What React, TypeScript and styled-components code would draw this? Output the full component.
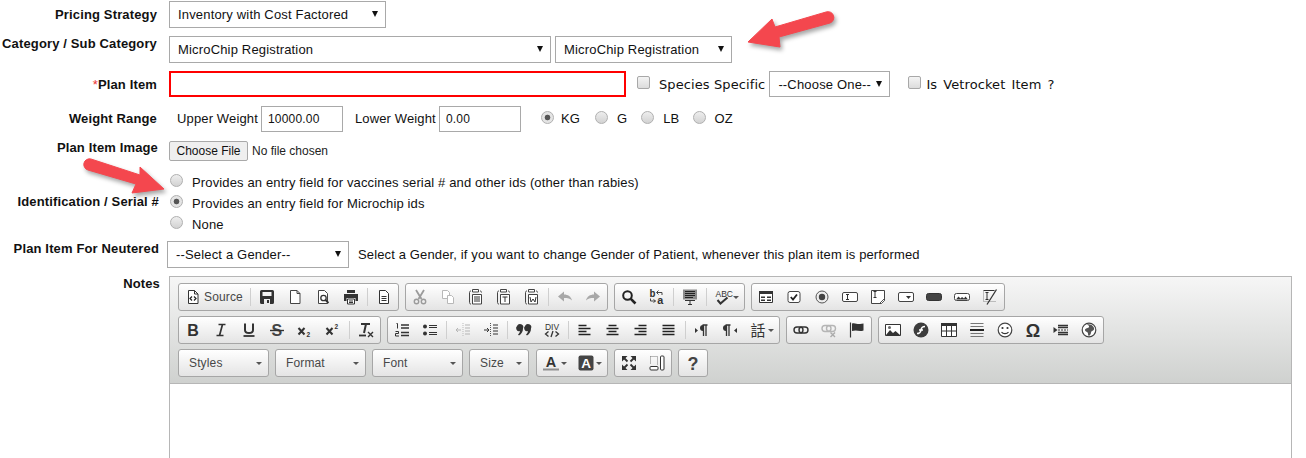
import React from 'react';
import styled, { createGlobalStyle } from 'styled-components';

const GlobalStyle = createGlobalStyle`
  html, body {
    margin: 0;
    padding: 0;
    background: #fff;
    overflow: hidden;
  }
  body {
    font-family: 'Liberation Sans', Arial, sans-serif;
    font-size: 13px;
    letter-spacing: 0.14px;
    color: #111;
  }
`;

// ckeditor toolbar glyphs, all on a 16x16 grid
const ICONS: Record<string, React.ReactNode> = {
  source: (
    <>
      <path d="M3.500 1.500h6l3.500 3.500v9.500h-9.500z" fill="#fff" stroke="#333" />
      <path d="M9.500 1.500v3.500h3.500" fill="none" stroke="#333" />
      <path d="M7 7.500l-2 2 2 2M9 7.500l2 2-2 2" fill="none" stroke="#222" strokeWidth="1.200" />
    </>
  ),
  save: (
    <path
      fillRule="evenodd"
      d="M2.500 1h11a1.500 1.500 0 0 1 1.500 1.500v11a1.500 1.500 0 0 1-1.500 1.500h-11a1.500 1.500 0 0 1-1.500-1.500v-11a1.500 1.500 0 0 1 1.500-1.500zM3.500 3v4h9v-4zM5 10v5h6v-5zM8 11h2v3h-2z"
      fill="#333"
    />
  ),
  newpage: <path d="M3.500 1.500h6.500l3 3v10h-9.500zM10 1.500v3h3" fill="#fff" stroke="#444" />,
  preview: (
    <>
      <path d="M3.500 1.500h6l3 3v10h-9z" fill="#fff" stroke="#444" />
      <circle cx="8.500" cy="9" r="2.700" fill="#fff" stroke="#333" strokeWidth="1.300" />
      <path d="M10.500 11l3 3" stroke="#333" strokeWidth="1.800" />
    </>
  ),
  print: (
    <>
      <path d="M4 1h8v3h-8z" fill="#333" />
      <path d="M1 5h14v7h-2.500v-3h-9v3h-2.500z" fill="#333" />
      <path d="M4.500 10h7v5h-7z" fill="#fff" stroke="#333" />
      <path d="M6 12h4M6 13.500h4" stroke="#333" />
    </>
  ),
  templates: (
    <>
      <path d="M3.500 1.500h6l3 3v10h-9z" fill="#fff" stroke="#333" />
      <path d="M5.500 7.500h5M5.500 9.500h5M5.500 11.500h5" stroke="#333" />
    </>
  ),
  cut: (
    <g fill="none" stroke="#9b9b9b">
      <path d="M4 1l5.500 9M12 1l-5.500 9" strokeWidth="1.800" />
      <circle cx="4.500" cy="12.500" r="2.200" strokeWidth="1.400" />
      <circle cx="11.500" cy="12.500" r="2.200" strokeWidth="1.400" />
    </g>
  ),
  copy: (
    <g fill="#fff" stroke="#b8b8b8">
      <path d="M2.500 1.500h5l2 2v6h-7z" />
      <path d="M7.500 6.500h4l2 2v6h-6z" />
    </g>
  ),
  paste: (
    <>
      <path d="M3 15c-1 0-1.500-.5-1.500-1.500v-10c0-1 .5-1.500 1.500-1.500M12 2c1 0 1.500.5 1.500 1.500" fill="none" stroke="#444" />
      <path d="M4.500 0.500h6v2.500h-6z" fill="#fff" stroke="#444" />
      <path d="M4.500 5.500h9v9.500h-9z" fill="#fff" stroke="#444" />
      <path d="M6 8h6M6 10h6M6 12h6" stroke="#333" />
    </>
  ),
  pastetext: (
    <>
      <path d="M3 15c-1 0-1.500-.5-1.500-1.500v-10c0-1 .5-1.500 1.500-1.500M12 2c1 0 1.500.5 1.500 1.500" fill="none" stroke="#444" />
      <path d="M4.500 0.500h6v2.500h-6z" fill="#fff" stroke="#444" />
      <path d="M4.500 5.500h9v9.500h-9z" fill="#fff" stroke="#444" />
      <path d="M6.500 8h5M9 8v5" stroke="#333" />
    </>
  ),
  pasteword: (
    <>
      <path d="M3 15c-1 0-1.500-.5-1.500-1.500v-10c0-1 .5-1.500 1.500-1.500M12 2c1 0 1.500.5 1.500 1.500" fill="none" stroke="#444" />
      <path d="M4.500 0.500h6v2.500h-6z" fill="#fff" stroke="#444" />
      <path d="M4.500 5.500h9v9.500h-9z" fill="#fff" stroke="#444" />
      <path d="M6 8l1 5 2-3 2 3 1-5" fill="none" stroke="#333" />
    </>
  ),
  undo: <path d="M1 7.500l6-5v3c4 0 7 2 8 6-2-2-4-2.500-8-2.500v3.500z" fill="#a8a8a8" />,
  redo: <path d="M15 7.500l-6-5v3c-4 0-7 2-8 6 2-2 4-2.500 8-2.500v3.500z" fill="#a8a8a8" />,
  find: (
    <>
      <circle cx="6.500" cy="6.500" r="4.300" fill="none" stroke="#222" strokeWidth="2" />
      <path d="M9.800 9.800l4.700 4.700" stroke="#222" strokeWidth="2.600" />
    </>
  ),
  replace: (
    <>
      <text x="0.500" y="7.500" fontSize="10" fontFamily="'Liberation Mono'" fontWeight="700" fill="#333">b</text>
      <text x="8" y="15" fontSize="11" fontFamily="'Liberation Mono'" fontWeight="700" fill="#333">a</text>
      <path d="M8 3.500h5v2.500M9.500 1.500l-2 2 2 2M1.500 9.500v2.500h5M4.500 10.500l2 1.500-2 1.500" fill="none" stroke="#444" />
    </>
  ),
  selectall: (
    <>
      <path d="M1 0.500h14v10h-14z" fill="#8b8b8b" />
      <path d="M3 2.500h10M3 4.500h10M3 6.500h10M3 8.500h8" stroke="#222" />
      <path d="M3 11.500h10M6 15.500h4M8 12v3.500" stroke="#333" />
    </>
  ),
  spell: (
    <>
      <text x="0.500" y="7.500" fontSize="8.500" fontFamily="'Liberation Sans'" letterSpacing="0" fill="#333">ABC</text>
      <path d="M2.500 11l3 3.500 7-6" fill="none" stroke="#333" strokeWidth="2" />
    </>
  ),
  form: (
    <>
      <path d="M1.500 2.500h13v11h-13z" fill="#fff" stroke="#333" />
      <path d="M1 2h14v3h-14z" fill="#333" />
      <path d="M3 7.500h4v1.500h-4zM9 7.500h4v1.500h-4zM3 10.500h4v1.500h-4zM9 10.500h4v1.500h-4z" fill="#333" />
    </>
  ),
  checkbox: (
    <>
      <rect x="2" y="2.500" width="12" height="11" rx="2" fill="#fff" stroke="#444" />
      <path d="M4.800 8l2.200 2.500 4-5" fill="none" stroke="#222" strokeWidth="1.800" />
    </>
  ),
  radio: (
    <>
      <circle cx="8" cy="8" r="6" fill="#eee" stroke="#555" />
      <circle cx="8" cy="8" r="3.200" fill="#444" />
    </>
  ),
  textfield: (
    <>
      <rect x="0.500" y="3.500" width="15" height="9" rx="1.500" fill="#fff" stroke="#444" />
      <path d="M4 5.500h3M4 10.500h3M5.500 5.500v5" stroke="#333" />
    </>
  ),
  textarea: (
    <>
      <path d="M1.500 1.500h13v10l-3 3h-10z" fill="#fff" stroke="#444" />
      <path d="M3.500 2.500h3M3.500 8.500h3M5 2.500v6" stroke="#333" />
      <path d="M10 14l4.500-4.500M12 14l2.500-2.500" stroke="#555" />
    </>
  ),
  select: (
    <>
      <rect x="0.500" y="3.500" width="15" height="9" rx="1.500" fill="#fff" stroke="#444" />
      <path d="M8 7h5l-2.500 3z" fill="#333" />
    </>
  ),
  button: <rect x="0.500" y="4.500" width="15" height="7" rx="2" fill="#444" stroke="#333" />,
  imagebutton: (
    <>
      <rect x="0.500" y="4.500" width="15" height="7" rx="2" fill="#fff" stroke="#444" />
      <path d="M2 10.500l2.500-3 2 2 1.500-1.500 2 1.500 1.500-2 2.500 3z" fill="#333" />
    </>
  ),
  hidden: (
    <>
      <path d="M1.500 1.500h11" stroke="#333" />
      <path d="M1.500 1.500v11h12" fill="none" stroke="#888" strokeDasharray="1 1" />
      <path d="M3.500 3.500h3M3.500 10.500h3M5 3.500v7" stroke="#333" />
      <path d="M5 15.500l9.500-15" stroke="#333" strokeWidth="1.300" />
    </>
  ),
  bold: <text x="8" y="13.500" textAnchor="middle" fontSize="16" fontWeight="900" fontFamily="'Liberation Sans'" fill="#333">B</text>,
  italic: <path d="M5.500 2.500h7M3.500 13.500h7M9.500 2.500l-3 11" fill="none" stroke="#333" strokeWidth="1.700" />,
  underline: (
    <>
      <path d="M4 1.500v6.500c0 2 1.500 3 4 3s4-1 4-3v-6.500" fill="none" stroke="#333" strokeWidth="2" />
      <path d="M2.500 14h11" stroke="#333" strokeWidth="1.800" />
    </>
  ),
  strike: (
    <>
      <text x="8" y="13.500" textAnchor="middle" fontSize="16" fontWeight="700" fontFamily="'Liberation Sans'" fill="#444">S</text>
      <path d="M1 8.500h14" stroke="#333" strokeWidth="1.400" />
    </>
  ),
  subscript: (
    <>
      <path d="M1.500 6l6 6.500M7.500 6l-6 6.500" stroke="#333" strokeWidth="2" />
      <text x="9.500" y="15" fontSize="6.500" fontWeight="700" fontFamily="'Liberation Sans'" fill="#333">2</text>
    </>
  ),
  superscript: (
    <>
      <path d="M1.500 6l6 6.500M7.500 6l-6 6.500" stroke="#333" strokeWidth="2" />
      <text x="9.500" y="7" fontSize="6.500" fontWeight="700" fontFamily="'Liberation Sans'" fill="#333">2</text>
    </>
  ),
  removeformat: (
    <>
      <path d="M3 2h9M8 2l-2 9" fill="none" stroke="#333" strokeWidth="2" />
      <path d="M1 13.500h7" stroke="#333" strokeWidth="1.800" />
      <path d="M10 10l5 5M15 10l-5 5" stroke="#333" strokeWidth="1.400" />
    </>
  ),
  numbered: (
    <>
      <path d="M2.500 1.500h1v5M1.500 9.500h3v2h-3v2.500h3.500" fill="none" stroke="#333" />
      <path d="M7 3h8M7 6h8M7 10.500h8M7 13.500h8" stroke="#333" strokeWidth="1.300" />
    </>
  ),
  bulleted: (
    <>
      <circle cx="3" cy="4.500" r="2" fill="#333" />
      <circle cx="3" cy="11.500" r="2" fill="#333" />
      <path d="M7 3.500h8M7 5.500h8M7 10.500h8M7 12.500h8" stroke="#333" strokeWidth="1.200" />
    </>
  ),
  outdent: (
    <>
      <path d="M8 1v14" stroke="#bbb" strokeDasharray="1 1" />
      <path d="M1 8h5M3 6l-2 2 2 2M10 3h5M10 6h5M10 9h5M10 12h5" fill="none" stroke="#b5b5b5" />
    </>
  ),
  indent: (
    <>
      <path d="M7.500 1v14" stroke="#555" strokeDasharray="1 1" />
      <path d="M1 8h5M4 6l2 2-2 2M10 3h5M10 6h5M10 9h5M10 12h5" fill="none" stroke="#333" />
    </>
  ),
  blockquote: (
    <>
      <path d="M1 4a3 3 0 1 1 6 2.500c0 3-1.500 5.500-4 7l-1-1c1.200-1 1.800-2 2-3.500a3 3 0 0 1-3-5z" fill="#333" />
      <path d="M9 4a3 3 0 1 1 6 2.500c0 3-1.500 5.500-4 7l-1-1c1.200-1 1.800-2 2-3.500a3 3 0 0 1-3-5z" fill="#333" />
    </>
  ),
  creatediv: (
    <>
      <text x="8" y="7.500" textAnchor="middle" fontSize="8.500" fontFamily="'Liberation Sans'" letterSpacing="0" fill="#333">DIV</text>
      <path d="M4.500 9.500l-3 2.500 3 2.500M11.500 9.500l3 2.500-3 2.500M9 9l-2 6" fill="none" stroke="#333" strokeWidth="1.300" />
    </>
  ),
  alignleft: <path d="M1.500 3.500h8M1.500 6.500h12M1.500 9.500h8M1.500 12.500h12" stroke="#222" strokeWidth="1.500" />,
  aligncenter: <path d="M3.500 3.500h8M1.500 6.500h12M3.500 9.500h8M1.500 12.500h12" stroke="#222" strokeWidth="1.500" />,
  alignright: <path d="M5.500 3.500h8M1.500 6.500h12M5.500 9.500h8M1.500 12.500h12" stroke="#222" strokeWidth="1.500" />,
  justify: <path d="M1.500 3.500h12M1.500 6.500h12M1.500 9.500h12M1.500 12.500h12" stroke="#222" strokeWidth="1.500" />,
  ltr: (
    <>
      <path d="M1 6l3 2.500-3 2.500z" fill="#333" />
      <path d="M8.500 3h5M9.500 3v11M12 3v11" fill="none" stroke="#333" strokeWidth="1.300" />
      <path d="M9 3a3 3 0 0 0 0 6h1v-6z" fill="#333" />
    </>
  ),
  rtl: (
    <>
      <path d="M15 6l-3 2.500 3 2.500z" fill="#333" />
      <path d="M3.500 3h5M4.500 3v11M7 3v11" fill="none" stroke="#333" strokeWidth="1.300" />
      <path d="M4 3a3 3 0 0 0 0 6h1v-6z" fill="#333" />
    </>
  ),
  language: <text x="8" y="13.500" textAnchor="middle" fontSize="15" fontFamily="'Noto Sans CJK SC', sans-serif" letterSpacing="0" fill="#333">話</text>,
  link: (
    <g fill="none" stroke="#333" strokeWidth="1.400">
      <rect x="1" y="5" width="9" height="6" rx="3" />
      <rect x="6" y="5" width="9" height="6" rx="3" />
    </g>
  ),
  unlink: (
    <>
      <g fill="none" stroke="#b5b5b5" strokeWidth="1.400">
        <rect x="1" y="3.500" width="9" height="6" rx="3" />
        <rect x="5.500" y="3.500" width="9" height="6" rx="3" />
      </g>
      <path d="M9.500 10.500l4.500 4.500M14 10.500l-4.500 4.500" stroke="#aaa" strokeWidth="1.400" />
    </>
  ),
  anchor: (
    <>
      <path d="M1.500 0.500v15" stroke="#333" strokeWidth="1.200" />
      <path d="M3 1.500c3-1 5 1 8 .5l3.500-.5v7c-3 1-5.500.2-8 0l-3.500.5z" fill="#333" />
    </>
  ),
  image: (
    <>
      <path d="M0.500 2.500h15v11h-15z" fill="#fff" stroke="#333" />
      <path d="M1 13l4-5 3 3 2.500-2 4.500 4z" fill="#333" />
      <circle cx="4.500" cy="5.500" r="1.500" fill="#666" />
    </>
  ),
  flash: (
    <>
      <circle cx="8" cy="8" r="7.500" fill="#3d3d3d" />
      <path d="M12 4.500c-3 0-3.500 1-4 3.500s-1 3.500-4 3.500M6 8h4" fill="none" stroke="#fff" strokeWidth="1.600" />
    </>
  ),
  table: (
    <>
      <path d="M0.500 1.500h15v13h-15z" fill="#fff" stroke="#333" />
      <path d="M0 1h16v3h-16z" fill="#333" />
      <path d="M0.500 9h15M5.500 4v10M10.500 4v10" stroke="#333" />
    </>
  ),
  hr: (
    <>
      <path d="M1.500 1.500h13M1.500 4.500h13M1.500 11.500h13M1.500 14.500h13" stroke="#777" />
      <path d="M1 8h14" stroke="#222" strokeWidth="2" />
    </>
  ),
  smiley: (
    <>
      <circle cx="8" cy="8" r="6.800" fill="#fff" stroke="#444" strokeWidth="1.200" />
      <circle cx="5.500" cy="6" r="1.100" fill="#333" />
      <circle cx="10.500" cy="6" r="1.100" fill="#333" />
      <path d="M4.500 10c1.500 2.200 5.500 2.200 7 0" fill="none" stroke="#333" strokeWidth="1.200" />
    </>
  ),
  specialchar: <text x="8" y="14.500" textAnchor="middle" fontSize="18" fontWeight="700" fontFamily="'Liberation Sans'" letterSpacing="0" fill="#333">Ω</text>,
  pagebreak: (
    <>
      <path d="M0.500 5l4 3-4 3z" fill="#333" />
      <path d="M5 3.500h10M5 5.500h10M5 10.500h10M5 12.500h10" stroke="#333" strokeWidth="1.400" />
      <path d="M5 8h10" stroke="#333" strokeDasharray="2 1" />
    </>
  ),
  iframe: (
    <>
      <circle cx="8" cy="8" r="6.800" fill="#fff" stroke="#444" strokeWidth="1.200" />
      <path d="M6 2c1 1.500 2.500 1.500 2 3s-4 1-4 3 3 1.500 3 3.500.5 2 1 2.500c1-1 2-2 2-3.500s2-1.500 3-3-2-5-4-5z" fill="#555" />
    </>
  ),
  maximize: (
    <>
      <path d="M1 1h5.500l-5.500 5.500zM15 1v5.500l-5.500-5.500zM1 15v-5.500l5.500 5.500zM15 15h-5.500l5.500-5.500z" fill="#333" />
      <path d="M3 3l3.500 3.500M13 3l-3.500 3.500M3 13l3.500-3.500M13 13l-3.500-3.500" stroke="#333" strokeWidth="1.800" />
    </>
  ),
  showblocks: (
    <>
      <path d="M1.500 1.500h7v8M1.500 1.500v8" fill="none" stroke="#777" strokeDasharray="1 1" />
      <rect x="1" y="11.500" width="8" height="3.500" rx="1" fill="#fff" stroke="#333" />
      <rect x="11.500" y="1" width="3.500" height="14" rx="1" fill="#fff" stroke="#333" />
    </>
  ),
  about: <text x="8" y="15" textAnchor="middle" fontSize="18" fontWeight="700" fontFamily="'Liberation Sans'" fill="#444">?</text>,
  textcolor: (
    <>
      <text x="8" y="12" textAnchor="middle" fontSize="14.500" fontWeight="700" fontFamily="'Liberation Sans'" letterSpacing="0" fill="#333">A</text>
      <path d="M0 14.500h16" stroke="#8f8f8f" strokeWidth="2" />
    </>
  ),
  bgcolor: (
    <>
      <rect x="0.500" y="0.500" width="15" height="15" rx="2" fill="#444" />
      <text x="8" y="13" textAnchor="middle" fontSize="13.500" fontWeight="700" fontFamily="'Liberation Sans'" letterSpacing="0" fill="#fff">A</text>
    </>
  ),
};

const IconSvg = styled.svg`
  overflow: visible;
  flex: none;
`;

const Icon = ({ name }: { name: string }) => (
  <IconSvg width="16" height="16" viewBox="0 0 16 16">
    {ICONS[name]}
  </IconSvg>
);

const Page = styled.div`
  position: relative;
  width: 1306px;
  height: 458px;
  padding-top: 1px;
  box-sizing: border-box;
  overflow: hidden;
`;

const Row = styled.div<{ $top: number }>`
  display: grid;
  grid-template-columns: 169px 1fr;
  margin-top: ${(p) => p.$top}px;
`;

const Label = styled.label<{ $right?: number; $pad: number }>`
  font-weight: 700;
  font-size: 13px;
  line-height: 15px;
  text-align: right;
  white-space: nowrap;
  color: #111;
  padding-top: ${(p) => p.$pad}px;
  padding-right: ${(p) => p.$right ?? 12}px;
`;

const Required = styled.span`
  color: #e33;
  font-weight: 400;
`;

const Controls = styled.div<{ $shift?: number }>`
  display: flex;
  align-items: center;
  margin-left: ${(p) => p.$shift ?? 0}px;
`;

const SelectWrap = styled.div<{ $width: number; $height?: number; $left?: number }>`
  position: relative;
  width: ${(p) => p.$width}px;
  height: ${(p) => p.$height ?? 27}px;
  margin-left: ${(p) => p.$left ?? 0}px;
  flex: none;

  &::after {
    content: '';
    position: absolute;
    top: 10px;
    right: 8px;
    border-left: 3.5px solid transparent;
    border-right: 3.5px solid transparent;
    border-top: 6px solid #111;
    pointer-events: none;
  }
`;

const Select = styled.select`
  appearance: none;
  width: 100%;
  height: 100%;
  box-sizing: border-box;
  border: 1px solid #a9a9a9;
  border-radius: 0;
  background: #fff;
  font: 13px 'Liberation Sans', Arial, sans-serif;
  letter-spacing: 0.17px;
  color: #111;
  padding: 0 0 0 8px;
  outline: none;
`;

const PlanInput = styled.input`
  width: 457px;
  height: 26px;
  box-sizing: border-box;
  border: 2px solid #f00;
  background: #fff;
  padding: 0;
  outline: none;
  flex: none;
`;

const WeightInput = styled.input`
  width: 82px;
  height: 26px;
  box-sizing: border-box;
  border: 1px solid #a9a9a9;
  background: #fff;
  font: 12px 'Liberation Sans', Arial, sans-serif;
  letter-spacing: 0.2px;
  color: #111;
  padding: 0 0 0 6px;
  outline: none;
  flex: none;
`;

const Text = styled.span<{ $left?: number; $right?: number; $lift?: boolean }>`
  margin-left: ${(p) => p.$left ?? 0}px;
  margin-right: ${(p) => p.$right ?? 0}px;
  padding-bottom: ${(p) => (p.$lift ? 2 : 0)}px;
  white-space: nowrap;
`;

const WideText = styled(Text)<{ $word?: number }>`
  font-family: 'DejaVu Sans', Verdana, sans-serif;
  font-size: 13px;
  letter-spacing: 0.1px;
  word-spacing: ${(p) => p.$word ?? 0}px;
`;

const Check = styled.input.attrs({ type: 'checkbox' })<{ $left?: number }>`
  appearance: none;
  width: 13px;
  height: 13px;
  margin: -4px 0 0 ${(p) => p.$left ?? 0}px;
  box-sizing: border-box;
  border: 1px solid #a8a8a8;
  border-radius: 2px;
  background: linear-gradient(#f4f4f4, #dcdcdc);
  flex: none;
`;

const Radio = styled.input.attrs({ type: 'radio' })<{ $left?: number }>`
  appearance: none;
  width: 13px;
  height: 13px;
  margin: -3px 0 0 ${(p) => p.$left ?? 0}px;
  box-sizing: border-box;
  border: 1px solid #b0b0b0;
  border-radius: 50%;
  background: linear-gradient(#eee, #d2d2d2);
  flex: none;

  &:checked {
    background: radial-gradient(circle, #555 0 2.5px, #e4e4e4 3.2px);
  }
`;

const FileInput = styled.input.attrs({ type: 'file' })`
  font: 12px 'Liberation Sans', Arial, sans-serif;
  color: #222;
  height: 20px;
  margin-top: 1px;

  &::file-selector-button {
    width: 79px;
    height: 20px;
    margin-right: 4px;
    border: 1px solid #a9a9a9;
    border-radius: 2px;
    background: #efefef;
    font: 12px 'Liberation Sans', Arial, sans-serif;
    color: #111;
    padding: 0;
  }
`;

const RadioStack = styled.div`
  display: flex;
  flex-direction: column;
`;

const RadioLine = styled.div`
  display: flex;
  align-items: center;
  height: 21px;
  padding-left: 1px;

  ${Text} {
    margin-left: 9px;
    padding-top: 2px;
  }
`;

const Editor = styled.div`
  width: 1123px;
  height: 190px;
  box-sizing: border-box;
  border: 1px solid #b6b6b6;
  border-bottom: 0;
  background: #fff;
`;

const Toolbar = styled.div`
  height: 107px;
  box-sizing: border-box;
  padding: 6px 0 0 8px;
  border-bottom: 1px solid #b6b6b6;
  background: linear-gradient(#f6f6f6, #cfd1cf);
`;

const ToolRow = styled.div`
  display: flex;
  gap: 6px;
  height: 28px;
  margin-bottom: 5px;
`;

const Group = styled.div<{ $left?: number }>`
  display: flex;
  align-items: center;
  height: 28px;
  box-sizing: border-box;
  margin-left: ${(p) => p.$left ?? 0}px;
  border: 1px solid #a6a6a6;
  border-radius: 3px;
  background: linear-gradient(#fff, #e4e4e4);
`;

const ToolButton = styled.div<{ $wide?: boolean }>`
  display: flex;
  align-items: center;
  gap: 2px;
  height: 26px;
  box-sizing: border-box;
  padding: 0 6px;
  width: ${(p) => (p.$wide ? 35 : 28)}px;
  flex: none;
`;

const SourceButton = styled.div`
  display: flex;
  align-items: center;
  gap: 3px;
  width: 69px;
  height: 26px;
  box-sizing: border-box;
  padding-left: 6px;
  font-size: 12px;
  color: #484848;
  flex: none;
`;

const Caret = styled.span`
  width: 0;
  height: 0;
  flex: none;
  border-left: 3px solid transparent;
  border-right: 3px solid transparent;
  border-top: 3px solid #555;
`;

const Sep = styled.span`
  width: 1px;
  height: 18px;
  margin: 0 2px;
  background: #cfcfcf;
  flex: none;
`;

const Combo = styled.div<{ $width: number }>`
  display: flex;
  align-items: center;
  justify-content: space-between;
  width: ${(p) => p.$width}px;
  height: 28px;
  box-sizing: border-box;
  padding: 0 6px 0 10px;
  border: 1px solid #a6a6a6;
  border-radius: 3px;
  background: linear-gradient(#fff, #e4e4e4);
  font-size: 12px;
  color: #484848;
  flex: none;
`;

const Arrow = styled.svg`
  position: absolute;
  left: 0;
  top: 0;
  pointer-events: none;
  filter: drop-shadow(2px 3px 2px rgba(0, 0, 0, 0.35));
`;

const Tools = ({ names }: { names: string[] }) => (
  <>
    {names.map((n, i) =>
      n === '|' ? (
        <Sep key={i} />
      ) : (
        <ToolButton key={i}>
          <Icon name={n} />
        </ToolButton>
      ),
    )}
  </>
);

const DropTool = ({ name }: { name: string }) => (
  <ToolButton $wide>
    <Icon name={name} />
    <Caret />
  </ToolButton>
);

export default function App() {
  return (
    <Page>
      <GlobalStyle />

      <Row $top={0}>
        <Label $pad={6}>Pricing Strategy</Label>
        <Controls>
          <SelectWrap $width={217}>
            <Select defaultValue="a">
              <option value="a">Inventory with Cost Factored</option>
            </Select>
          </SelectWrap>
        </Controls>
      </Row>

      <Row $top={8}>
        <Label $pad={0}>Category / Sub Category</Label>
        <Controls>
          <SelectWrap $width={382}>
            <Select defaultValue="a">
              <option value="a">MicroChip Registration</option>
            </Select>
          </SelectWrap>
          <SelectWrap $width={177} $left={4}>
            <Select defaultValue="a">
              <option value="a">MicroChip Registration</option>
            </Select>
          </SelectWrap>
        </Controls>
      </Row>

      <Row $top={8}>
        <Label $pad={6}>
          <Required>*</Required>Plan Item
        </Label>
        <Controls>
          <PlanInput />
          <Check $left={11} />
          <WideText $left={9} $right={4}>
            Species Specific
          </WideText>
          <SelectWrap $width={121} $height={26}>
            <Select defaultValue="a">
              <option value="a">--Choose One--</option>
            </Select>
          </SelectWrap>
          <Check $left={18} />
          <WideText $left={5} $word={1.8}>
            Is Vetrocket Item ?
          </WideText>
        </Controls>
      </Row>

      <Row $top={9}>
        <Label $pad={5}>Weight Range</Label>
        <Controls>
          <Text $left={8} $right={3} $lift>
            Upper Weight
          </Text>
          <WeightInput defaultValue="10000.00" />
          <Text $left={12} $right={3} $lift>
            Lower Weight
          </Text>
          <WeightInput defaultValue="0.00" />
          <Radio name="unit" defaultChecked $left={20} />
          <Text $left={7} $lift>
            KG
          </Text>
          <Radio name="unit" $left={15} />
          <Text $left={9} $lift>
            G
          </Text>
          <Radio name="unit" $left={14} />
          <Text $left={9} $lift>
            LB
          </Text>
          <Radio name="unit" $left={14} />
          <Text $left={8} $lift>
            OZ
          </Text>
        </Controls>
      </Row>

      <Row $top={8}>
        <Label $pad={0} $right={11}>
          Plan Item Image
        </Label>
        <Controls>
          <FileInput />
        </Controls>
      </Row>

      <Row $top={10}>
        <Label $pad={23} $right={10}>
          Identification / Serial #
        </Label>
        <RadioStack>
          <RadioLine>
            <Radio name="serial" />
            <Text>Provides an entry field for vaccines serial # and other ids (other than rabies)</Text>
          </RadioLine>
          <RadioLine>
            <Radio name="serial" defaultChecked />
            <Text>Provides an entry field for Microchip ids</Text>
          </RadioLine>
          <RadioLine>
            <Radio name="serial" />
            <Text>None</Text>
          </RadioLine>
        </RadioStack>
      </Row>

      <Row $top={7}>
        <Label $pad={0} $right={10}>
          Plan Item For Neutered
        </Label>
        <Controls $shift={-2}>
          <SelectWrap $width={182}>
            <Select defaultValue="a">
              <option value="a">--Select a Gender--</option>
            </Select>
          </SelectWrap>
          <Text $left={9}>Select a Gender, if you want to change Gender of Patient, whenever this plan item is performed</Text>
        </Controls>
      </Row>

      <Row $top={8}>
        <Label $pad={0} $right={9}>
          Notes
        </Label>
        <Editor>
          <Toolbar>
            <ToolRow>
              <Group>
                <SourceButton>
                  <Icon name="source" />
                  Source
                </SourceButton>
                <Sep />
                <Tools names={['save', 'newpage', 'preview', 'print', '|', 'templates']} />
              </Group>
              <Group>
                <Tools names={['cut', 'copy', 'paste', 'pastetext', 'pasteword', '|', 'undo', 'redo']} />
              </Group>
              <Group>
                <Tools names={['find', 'replace', '|', 'selectall', '|']} />
                <DropTool name="spell" />
              </Group>
              <Group>
                <Tools names={['form', 'checkbox', 'radio', 'textfield', 'textarea', 'select', 'button', 'imagebutton', 'hidden']} />
              </Group>
            </ToolRow>
            <ToolRow>
              <Group>
                <Tools names={['bold', 'italic', 'underline', 'strike', 'subscript', 'superscript', '|', 'removeformat']} />
              </Group>
              <Group>
                <Tools names={['numbered', 'bulleted', '|', 'outdent', 'indent', '|', 'blockquote', 'creatediv', '|', 'alignleft', 'aligncenter', 'alignright', 'justify', '|', 'ltr', 'rtl']} />
                <DropTool name="language" />
              </Group>
              <Group>
                <Tools names={['link', 'unlink', 'anchor']} />
              </Group>
              <Group>
                <Tools names={['image', 'flash', 'table', 'hr', 'smiley', 'specialchar', 'pagebreak', 'iframe']} />
              </Group>
            </ToolRow>
            <ToolRow>
              <Combo $width={91}>
                Styles
                <Caret />
              </Combo>
              <Combo $width={91}>
                Format
                <Caret />
              </Combo>
              <Combo $width={91}>
                Font
                <Caret />
              </Combo>
              <Combo $width={60}>
                Size
                <Caret />
              </Combo>
              <Group $left={1}>
                <DropTool name="textcolor" />
                <DropTool name="bgcolor" />
              </Group>
              <Group>
                <Tools names={['maximize', 'showblocks']} />
              </Group>
              <Group>
                <Tools names={['about']} />
              </Group>
            </ToolRow>
          </Toolbar>
        </Editor>
      </Row>

      <Arrow width="1306" height="458">
        <path d="M748 42 L772 19 L775 27 L826 12 A5.500 5.500 0 0 1 830 23 L779 37 L780 47 Z" fill="#f4474e" stroke="#f4474e" strokeLinejoin="round" />
        <path d="M164 189 L132 193 L136 184 L88 170 A5.500 5.500 0 0 1 91 159 L140 175 L140 167 Z" fill="#f4474e" stroke="#f4474e" strokeLinejoin="round" />
      </Arrow>
    </Page>
  );
}
